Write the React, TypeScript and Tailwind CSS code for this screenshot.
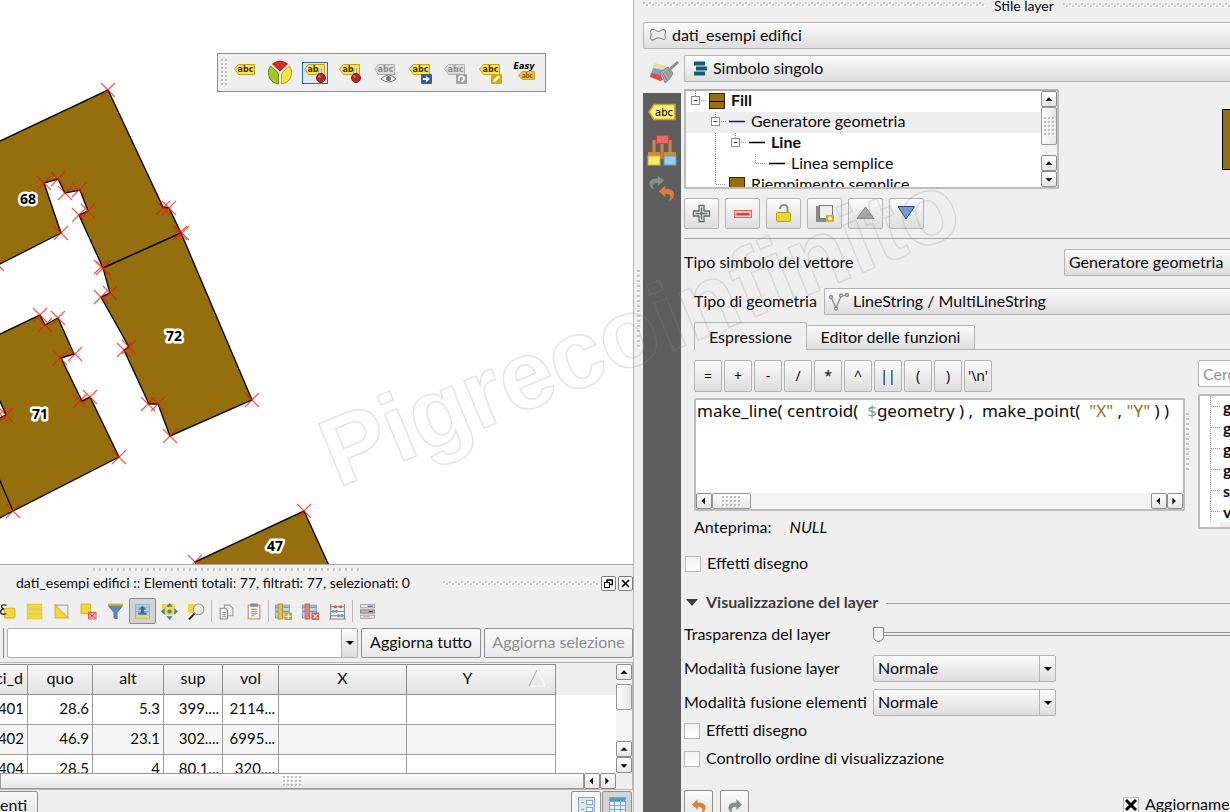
import { useState } from "react";
import type { ReactNode } from "react";

/* ---------- shared surfaces ---------- */

const raised =
  "border border-[#b4b4b4] bg-gradient-to-b from-[#fbfbfb] to-[#dedede]";

type HatchProps = { id: string; className?: string };

function Hatch({ id, className = "" }: HatchProps) {
  return (
    <svg className={`h-[5px] ${className}`} width="100%" aria-hidden="true">
      <defs>
        <pattern id={id} width="6" height="5" patternUnits="userSpaceOnUse">
          <rect x="1" y="1" width="2" height="2" fill="#fff" />
          <rect x="4" y="3" width="2" height="2" fill="#fff" />
          <rect x="0" y="0" width="2" height="2" fill="#c6c6c6" />
          <rect x="3" y="2" width="2" height="2" fill="#c6c6c6" />
        </pattern>
      </defs>
      <rect width="100%" height="5" fill={`url(#${id})`} />
    </svg>
  );
}

function Grip({ w, h }: { w: number; h: number }) {
  const dots: ReactNode[] = [];
  for (let y = 0; y < h; y += 4)
    for (let x = 0; x < w; x += 4)
      dots.push(
        <g key={`${x}-${y}`}>
          <rect x={x + 1} y={y + 1} width="2" height="2" fill="#fff" />
          <rect x={x} y={y} width="2" height="2" fill="#bdbdbd" />
        </g>
      );
  return (
    <svg width={w} height={h} aria-hidden="true">
      {dots}
    </svg>
  );
}

const arrows = {
  up: "M4 9L8 5L12 9Z",
  down: "M4 6L12 6L8 10Z",
  left: "M9 3L9 11L5 7Z",
  right: "M5 3L5 11L9 7Z",
};

function ScrollButton({ dir }: { dir: keyof typeof arrows }) {
  return (
    <button
      aria-label={`Scroll ${dir}`}
      className="flex h-4 w-4 shrink-0 items-center justify-center rounded-xs border border-[#8d8d8d] bg-gradient-to-b from-white to-[#e6e6e6]"
    >
      <svg width="14" height="14" viewBox="0 0 16 14">
        <path d={arrows[dir]} fill="#000" />
      </svg>
    </button>
  );
}

/* ---------- map canvas ---------- */

const buildings = [
  "-20,150 0,141 108,90 163,207 169,208 181,233 103,268 79,215 88,211 80,190 65,193 58,179 44,183 61,233 0,264 -20,274",
  "103,268 181,233 252,400 170,436 158,404 149,404 124,350 129,347 101,297 110,293",
  "-20,343 0,334 40,315 45,325 58,318 74,354 61,358 82,401 90,397 119,457 13,511 0,518 -20,528",
  "195,562 304,511 336,581 200,581",
];

const vertices = [
  [108, 90], [163, 208], [169, 208], [180, 233], [182, 233], [103, 268], [101, 267],
  [79, 215], [88, 211], [79, 190], [65, 193], [58, 179], [44, 183], [61, 233], [-3, 264],
  [252, 400], [170, 436], [158, 404], [148, 404], [124, 350], [129, 347], [101, 297], [110, 293],
  [40, 315], [45, 325], [58, 318], [75, 354], [60, 358], [80, 401], [90, 397], [119, 457],
  [13, 511], [6, 415], [0, 414], [195, 562], [304, 511],
];

const mapLabels = [
  { text: "68", x: 28, y: 204 },
  { text: "72", x: 174, y: 341 },
  { text: "71", x: 40, y: 419 },
  { text: "47", x: 275, y: 551 },
];

function MapDrawing() {
  return (
    <svg width="634" height="564" className="block" role="img" aria-label="Edifici">
      <g fill="#956f0d" stroke="#0b0b0b" strokeWidth="1.4">
        {buildings.map((p) => (
          <polygon key={p} points={p} />
        ))}
        <polygon points="-4,392 6,415 -4,420" fill="#fff" />
        <path d="M-2 476L13 511" />
      </g>
      <g stroke="#e5200f" strokeWidth="1.3" opacity="0.72">
        {vertices.map(([x, y], i) => (
          <path key={i} d={`M${x - 7} ${y - 7}l14 14m0 -14l-14 14`} />
        ))}
      </g>
      <g
        className="font-['Open_Sans','Noto_Sans',sans-serif] text-[14px] font-bold"
        textAnchor="middle"
        stroke="#fff"
        strokeWidth="5"
        strokeLinejoin="round"
        paintOrder="stroke"
      >
        {mapLabels.map((l) => (
          <text key={l.text} x={l.x} y={l.y}>
            {l.text}
          </text>
        ))}
      </g>
    </svg>
  );
}

/* ---------- label toolbar ---------- */

type TagProps = { gray?: boolean; label?: string; children?: ReactNode };

function TagIcon({ gray = false, label = "abc", children }: TagProps) {
  return (
    <svg width="24" height="24" viewBox="0 0 24 24" className="overflow-visible">
      <path
        d="M1.500 8L5.500 3.500H21.500V13.500H5.500Z"
        fill={gray ? "#dcdcdc" : "#fbe45c"}
        stroke={gray ? "#b0b0b0" : "#c79e1c"}
      />
      <text
        x={label === "abc" ? 12.500 : 10}
        y="11"
        textAnchor="middle"
        fontSize="8"
        fontWeight="700"
        fill={gray ? "#8e8e8e" : "#3c3310"}
        className="font-['DejaVu_Sans',sans-serif]"
      >
        {label}
      </text>
      {children}
    </svg>
  );
}

function Pin() {
  return (
    <g>
      <path d="M17 7V14" stroke="#777" strokeWidth="3" />
      <path d="M17 7V14" stroke="#eee" strokeWidth="1.500" />
      <circle cx="18" cy="17" r="4.500" fill="#b3271c" stroke="#7d150e" />
      <circle cx="16.500" cy="15.500" r="1.200" fill="#e2705f" />
    </g>
  );
}

function PieIcon() {
  return (
    <svg width="24" height="24" viewBox="0 0 24 24" className="overflow-visible">
      <path d="M12 10L4.500 3Q12 -2.500 19.500 3Z" fill="#d5301f" stroke="#9b1c10" />
      <path d="M10.500 12V23Q5 22.500 2 18Q-1.500 11 2.500 5Z" fill="#a8c32c" stroke="#6e8711" />
      <path d="M13.500 12V23Q19 22.500 22 18Q25.500 11 21.500 5Z" fill="#f3e14c" stroke="#bda31b" />
    </svg>
  );
}

function EasyIcon() {
  return (
    <svg width="24" height="24" viewBox="0 0 24 24" className="overflow-visible">
      <text
        x="11"
        y="8"
        textAnchor="middle"
        fontSize="8"
        fontWeight="700"
        fontStyle="italic"
        className="font-['DejaVu_Sans',sans-serif]"
      >
        Easy
      </text>
      <path d="M5.500 14.500L9 10.500H21.500V18.500H9Z" fill="#eec233" stroke="#cfa32a" />
      <text x="14.500" y="17" textAnchor="middle" fontSize="7" fontWeight="700" fill="#6b4a0c">
        abc
      </text>
    </svg>
  );
}

const labelTools: { name: string; icon: ReactNode; active?: boolean }[] = [
  { name: "Etichette", icon: <TagIcon /> },
  { name: "Diagrammi", icon: <PieIcon /> },
  { name: "Evidenzia etichette fissate", icon: <TagIcon label="ab"><Pin /></TagIcon>, active: true },
  { name: "Fissa etichette", icon: <TagIcon label="ab"><Pin /></TagIcon> },
  {
    name: "Mostra etichette",
    icon: (
      <TagIcon gray>
        <path d="M8 18Q15.500 10 23 18Q15.500 24 8 18Z" fill="#eee" stroke="#777" />
        <circle cx="15.500" cy="17.500" r="2.500" fill="#777" />
      </TagIcon>
    ),
  },
  {
    name: "Sposta etichetta",
    icon: (
      <TagIcon>
        <rect x="13" y="13" width="11" height="10" rx="1" fill="#3a5e93" />
        <path d="M15 17H18V15L22 18L18 21V19H15Z" fill="#fff" />
      </TagIcon>
    ),
  },
  {
    name: "Ruota etichetta",
    icon: (
      <TagIcon gray>
        <rect x="13" y="13" width="11" height="10" rx="1" fill="#a3a3a3" />
        <path d="M16 20V16.500Q18.500 13.500 21 16.500Q21.500 19.500 18.500 20.500" fill="none" stroke="#fff" strokeWidth="1.500" />
      </TagIcon>
    ),
  },
  {
    name: "Modifica etichetta",
    icon: (
      <TagIcon>
        <rect x="13" y="13" width="11" height="10" rx="1" fill="#d8a90f" />
        <path d="M15 21L16 18.500L20.500 14.500L22 16L17.500 20.500Z" fill="#fff" />
      </TagIcon>
    ),
  },
  { name: "Easy custom labeling", icon: <EasyIcon /> },
];

function LabelToolbar() {
  return (
    <div className="absolute top-[53px] left-[217px] flex h-[39px] items-center border border-[#8f8f8f] bg-[#efefef] px-[3px]">
      <Grip w={6} h={28} />
      {labelTools.map((t) => (
        <button key={t.name} aria-label={t.name} className="flex w-[35px] justify-center">
          <span className={t.active ? "-mt-1 -mb-1 h-5 bg-[#dbe8f4] outline outline-[#2a6fb5]" : "h-5"}>
            <span className="-mt-0.5 block">{t.icon}</span>
          </span>
        </button>
      ))}
    </div>
  );
}

/* ---------- attribute table dock ---------- */

function Plate({ children }: { children: ReactNode }) {
  return (
    <svg width="17" height="17" viewBox="0 0 16 16">
      {children}
    </svg>
  );
}

type Tool = { name: string; icon: ReactNode; pressed?: boolean; ruleAfter?: boolean };

const yellow = "#f3d83a";

const tableTools: Tool[] = [
  {
    name: "Seleziona con espressione",
    icon: (
      <Plate>
        <rect x="5" y="5" width="10" height="9" rx="1" fill={yellow} stroke="#d8b52c" />
        <path d="M7 2Q2 1 2.500 4Q3 5.500 5 5.500Q1 6 1.500 9Q3 11.500 7 10" fill="none" stroke="#333" strokeWidth="1.300" />
      </Plate>
    ),
  },
  {
    name: "Seleziona tutto",
    icon: (
      <Plate>
        {[1, 6, 11].map((y) => (
          <rect key={y} x="1" y={y} width="14" height="4" fill={yellow} stroke="#d3b634" strokeWidth="0.500" />
        ))}
      </Plate>
    ),
  },
  {
    name: "Inverti selezione",
    icon: (
      <Plate>
        <path d="M2 2H14V14Z" fill="#ededed" stroke="#aaa" />
        <path d="M2 2L14 14H2Z" fill={yellow} stroke="#d8b52c" />
      </Plate>
    ),
  },
  {
    name: "Deseleziona tutto",
    icon: (
      <Plate>
        <rect x="1" y="1" width="9" height="9" fill={yellow} stroke="#d8b52c" />
        <rect x="8" y="9" width="7" height="6" fill="#f8d8d2" stroke="#dc5b4b" />
        <path d="M9 10L14 14M14 10L9 14" stroke="#dc3c2c" />
      </Plate>
    ),
  },
  {
    name: "Filtra",
    icon: (
      <Plate>
        <path d="M1 2H15L9.500 9V15L6.500 14V9Z" fill="#5b8ab5" stroke="#3d678f" strokeWidth="0.700" />
        <path d="M1 1.500H15" stroke="#e4a93b" strokeWidth="2" />
      </Plate>
    ),
  },
  {
    name: "Sposta selezione in alto",
    pressed: true,
    icon: (
      <Plate>
        <rect x="1.500" y="1.500" width="13" height="13" fill="#b9d3e6" stroke="#8fb1ca" />
        <path d="M1 4.500H15M1 8H15" stroke="#8fb1ca" />
        <rect x="2" y="11.500" width="12" height="3" fill={yellow} />
        <path d="M8 2.500L12 6H9.500V9H12V11H4V9H6.500V6H4Z" fill="#3a6f9c" />
      </Plate>
    ),
  },
  {
    name: "Centra sulla selezione",
    icon: (
      <Plate>
        <rect x="1" y="1" width="12" height="10" fill={yellow} />
        <path d="M8 0L11 3.500H5ZM8 16L11 12.500H5ZM0 8L3.500 5V11ZM16 8L12.500 5V11Z" fill="#4c7fb0" />
        <circle cx="8" cy="8" r="2" fill="#4c7fb0" />
      </Plate>
    ),
  },
  {
    name: "Zoom sulla selezione",
    ruleAfter: true,
    icon: (
      <Plate>
        <rect x="0" y="1" width="8" height="8" fill={yellow} />
        <circle cx="10" cy="6" r="5" fill="#f0eede" stroke="#999" />
        <path d="M6 10L1 15.500" stroke="#3b3520" strokeWidth="2" />
      </Plate>
    ),
  },
  {
    name: "Copia righe",
    icon: (
      <Plate>
        <path d="M6 2H11L14 5V12H6Z" fill="#eee" stroke="#999" />
        <path d="M2 5H7L9 7V15H2Z" fill="#f2f2f2" stroke="#8b8b8b" />
        <path d="M4 9H7.500M4 11H7.500M4 13H7.500" stroke="#999" />
      </Plate>
    ),
  },
  {
    name: "Incolla righe",
    ruleAfter: true,
    icon: (
      <Plate>
        <rect x="3" y="2" width="11" height="13" fill="#eee" stroke="#c28d66" />
        <rect x="5" y="0.500" width="7" height="3" fill="#888" />
        <path d="M6 6H11M6 8H11M6 10H11M6 12H9" stroke="#999" />
      </Plate>
    ),
  },
  {
    name: "Nuova colonna",
    icon: (
      <Plate>
        <rect x="0.500" y="2" width="13" height="12" fill="#c3dcec" stroke="#7ba3c0" />
        <path d="M1 4H13M1 8H13" stroke="#6e9dbf" strokeWidth="1.500" />
        <rect x="3" y="1" width="4" height="14" fill="#e8c25c" stroke="#b98d25" />
        <rect x="9" y="9" width="7" height="7" fill="#d3a614" />
        <path d="M12.500 10V15M10 12.500H15" stroke="#fff" />
      </Plate>
    ),
  },
  {
    name: "Elimina colonna",
    icon: (
      <Plate>
        <rect x="0.500" y="2" width="13" height="12" fill="#c3dcec" stroke="#7ba3c0" />
        <path d="M1 4H13M1 8H13" stroke="#6e9dbf" strokeWidth="1.500" />
        <rect x="3" y="1" width="4" height="14" fill="#ef7f76" stroke="#d95c53" />
        <rect x="9" y="9" width="7" height="7" fill="#dd574b" />
        <path d="M10.500 10.500L14.500 14.500M14.500 10.500L10.500 14.500" stroke="#fff" />
      </Plate>
    ),
  },
  {
    name: "Calcolatore di campi",
    ruleAfter: true,
    icon: (
      <Plate>
        <path d="M1.500 1V15M14.500 1V15M1 3.500H15M1 8H15M1 12H15M0 15H16" stroke="#858585" />
        <g fill="#d8584c">
          <circle cx="6" cy="3.500" r="1.500" />
          <circle cx="11" cy="3.500" r="1.500" />
        </g>
        <g fill="#6d95b6">
          <circle cx="4" cy="8" r="1.300" />
          <circle cx="7" cy="8" r="1.300" />
          <circle cx="9" cy="12" r="1.300" />
          <circle cx="12" cy="12" r="1.300" />
        </g>
      </Plate>
    ),
  },
  {
    name: "Formattazione condizionale",
    icon: (
      <Plate>
        <g fill="#eee" stroke="#aaa">
          <rect x="1.500" y="1.500" width="13" height="3" />
          <rect x="1.500" y="11.500" width="13" height="3" />
        </g>
        <rect x="1.500" y="6.500" width="13" height="3" fill="#b9b9ac" stroke="#8d8d8d" />
        <path d="M8 3H13M9 8H13" stroke="#443a5a" />
        <path d="M4 13H10" stroke="#e08f7a" />
      </Plate>
    ),
  },
];

const columns = [
  { label: "ci_d", width: "w-[28px]" },
  { label: "quo", width: "w-[65px]" },
  { label: "alt", width: "w-[71px]" },
  { label: "sup", width: "w-[59px]" },
  { label: "vol", width: "w-[56px]" },
  { label: "X", width: "w-[128px]" },
  { label: "Y", width: "w-[149px]" },
];

const rows = [
  ["401", "28.6", "5.3", "399....", "2114...", "", ""],
  ["402", "46.9", "23.1", "302....", "6995...", "", ""],
  ["404", "28.5", "4", "80.1...", "320....", "", ""],
];

function AttributeTable() {
  return (
    <div className="mt-1 flex h-32 border-t border-r border-b border-[#b5b5b5] pt-px">
      <div className="flex min-w-0 flex-1 flex-col">
        <div className="h-[110px] overflow-hidden bg-[#fefefe]">
          <div className="bg-[linear-gradient(#efefef_31px,#fefefe_31px)]">
            <table className="w-[556px] table-fixed border-separate border-spacing-0">
              <thead>
                <tr>
                  {columns.map((c) => (
                    <th
                      key={c.label}
                      scope="col"
                      className={`${c.width} h-[31px] border-t border-r border-b border-[#8f8f8f] bg-gradient-to-b from-[#f8f8f8] to-[#e2e2e2] p-0 pb-1 text-center font-normal`}
                    >
                      {c.label === "Y" ? (
                        <span className="flex items-center">
                          <span className="w-[121px]">{c.label}</span>
                          <svg width="18" height="18" viewBox="0 0 18 18">
                            <path d="M1 17H17L9 1" fill="none" stroke="#fff" />
                            <path d="M1 17L9 1" stroke="#a5a5a5" />
                          </svg>
                        </span>
                      ) : (
                        <span className={c.label === "ci_d" ? "float-right mr-1" : ""}>{c.label}</span>
                      )}
                    </th>
                  ))}
                </tr>
              </thead>
              <tbody className="text-[15px]">
                {rows.map((r) => (
                  <tr key={r[0]} className="odd:bg-[#fefefe] even:bg-[#f5f5f5]">
                    {r.map((cell, i) => (
                      <td
                        key={i}
                        className="h-[30px] border-r border-b border-[#9c9c9c] p-0 pr-[3px] pb-1 text-right whitespace-nowrap"
                      >
                        <span className="float-right">{cell}</span>
                      </td>
                    ))}
                  </tr>
                ))}
              </tbody>
            </table>
          </div>
        </div>
        <div className="flex h-4 bg-[#efefef]">
          <div className="flex min-w-0 flex-1 items-center justify-center border border-[#999] bg-gradient-to-b from-white to-[#e4e4e4]">
            <Grip w={19} h={11} />
          </div>
          <ScrollButton dir="left" />
          <ScrollButton dir="right" />
        </div>
      </div>
      <div className="mb-4 flex w-4 flex-col bg-[#f3f3f3]">
        <ScrollButton dir="up" />
        <div className="mt-1 h-[26px] rounded-xs border border-[#999] bg-gradient-to-r from-white to-[#e4e4e4]" />
        <div className="flex-1" />
        <ScrollButton dir="up" />
        <ScrollButton dir="down" />
      </div>
    </div>
  );
}

function TableDock() {
  return (
    <section className="flex shrink-0 flex-col bg-[#efefef]">
      <div className="flex h-[8px] items-start justify-center border-t border-[#ababab] pt-[3px] pr-[180px]">
        <div className="h-[3px] w-[268px] bg-[repeating-linear-gradient(90deg,#c6c6c6_0_2px,#fff_2px_3px,transparent_3px_6px)]" />
      </div>
      <header className="flex h-[22px] items-center pl-4 text-[14px]">
        <h2 className="whitespace-nowrap">
          dati_esempi edifici :: Elementi totali: 77, filtrati: 77, selezionati: 0
        </h2>
        <div className="ml-auto flex items-center gap-0.5">
          <div className="w-[156px]">
            <Hatch id="dock-hatch" />
          </div>
          <button aria-label="Sgancia" className="flex h-[15px] w-[15px] items-center justify-center rounded-xs border border-[#7a7a7a] bg-white">
            <svg width="9" height="9" viewBox="0 0 9 9" fill="none" stroke="#000">
              <path d="M3 3V1H8.500V5.500H6" strokeWidth="1.500" />
              <rect x="0.500" y="3.500" width="5" height="5" />
            </svg>
          </button>
          <button aria-label="Chiudi" className="flex h-[15px] w-[15px] items-center justify-center rounded-xs border border-[#7a7a7a] bg-white">
            <svg width="9" height="9" viewBox="0 0 9 9" stroke="#000" strokeWidth="1.700">
              <path d="M1 1L8 8M8 1L1 8" />
            </svg>
          </button>
        </div>
      </header>
      <div className="-ml-1.5 flex h-[34px] items-center">
        {tableTools.map((t) => (
          <div key={t.name} className="flex items-center">
            <button
              aria-label={t.name}
              className={
                t.pressed
                  ? "flex h-[26px] w-[27px] items-center justify-center rounded-xs border border-[#8a8a8a] bg-[#d3d3d3]"
                  : "flex h-[26px] w-[27px] items-center justify-center"
              }
            >
              {t.icon}
            </button>
            {t.ruleAfter && <div className="mx-px h-[22px] w-px bg-[#bbb]" />}
          </div>
        ))}
      </div>
      <div className="flex h-[30px] gap-[3px]">
        <div className="w-1 border-r border-[#8f8f8f]" />
        <div className="flex min-w-0 flex-1 rounded-xs border border-[#b0b0b0] bg-[#fefefe]">
          <input aria-label="Espressione di aggiornamento" className="min-w-0 flex-1 px-1 outline-none" />
          <button aria-label="Apri elenco" className="flex w-4 items-center justify-center border-l border-[#b0b0b0] bg-gradient-to-b from-[#fbfbfb] to-[#dedede]">
            <svg width="8" height="4" viewBox="0 0 8 4">
              <path d="M0 0H8L4 4Z" />
            </svg>
          </button>
        </div>
        <button className="w-[120px] rounded-xs border border-[#8f8f8f] bg-gradient-to-b from-[#fafafa] to-[#eaeaea] pb-0.5 whitespace-nowrap">
          Aggiorna tutto
        </button>
        <button disabled className="w-[149px] rounded-xs border border-[#8f8f8f] bg-gradient-to-b from-[#fafafa] to-[#eaeaea] pb-0.5 whitespace-nowrap text-[#8b8f8b]">
          Aggiorna selezione
        </button>
      </div>
      <AttributeTable />
      <footer className="flex h-[22px] items-start justify-between overflow-hidden pt-px pr-px">
        <button className="-ml-px h-7 w-[39px] shrink-0 rounded-tr-xs border border-[#8f8f8f] bg-gradient-to-b from-[#f8f8f8] to-[#e6e6e6] text-left">
          enti
        </button>
        <div className="flex gap-px">
          <button aria-label="Vista modulo" className="h-7 w-[30px] rounded-xs border border-[#8f8f8f] bg-[#f6f6f6] px-1.5">
            <svg width="17" height="20" viewBox="0 0 17 20" fill="#dbe8f1" stroke="#86a7c0">
              <rect x="0.500" y="2.500" width="16" height="18" />
              <rect x="8.500" y="5.500" width="6" height="4" fill="#fff" />
              <rect x="8.500" y="12.500" width="6" height="4" fill="#fff" />
              <path d="M3 7.500H6M3 14.500H6" />
            </svg>
          </button>
          <button aria-label="Vista tabella" className="h-7 w-[30px] rounded-xs border border-[#8f8f8f] bg-[#d3d3d3] px-1.5">
            <svg width="17" height="20" viewBox="0 0 17 20" stroke="#86a7c0">
              <rect x="0.500" y="2.500" width="16" height="18" fill="#e6eff5" />
              <rect x="0.500" y="2.500" width="16" height="4" fill="#4f9ac7" />
              <path d="M0 10.500H17M0 14.500H17M0 18.500H17M5.500 6V20M11.500 6V20" />
            </svg>
          </button>
        </div>
      </footer>
    </section>
  );
}

/* ---------- layer styling dock ---------- */

type ComboProps = {
  label: string;
  id: string;
  options: string[];
  icon?: ReactNode;
  bleed?: boolean;
  className?: string;
};

function Combo({ label, id, options, icon, bleed = false, className = "" }: ComboProps) {
  return (
    <div
      className={`flex h-[27px] items-center ${raised} ${bleed ? "rounded-l-xs border-r-0" : "rounded-xs"} ${className}`}
    >
      {icon}
      <select
        id={id}
        aria-label={label}
        className="h-full min-w-0 flex-1 appearance-none bg-transparent pb-0.5 pl-1 outline-none"
      >
        {options.map((o) => (
          <option key={o}>{o}</option>
        ))}
      </select>
      {!bleed && (
        <span className="pointer-events-none flex h-full w-4 items-center justify-center border-l border-[#b4b4b4]">
          <svg width="8" height="4" viewBox="0 0 8 4">
            <path d="M0 0H8L4 4Z" />
          </svg>
        </span>
      )}
    </div>
  );
}

function Check({ id, label, checked = false }: { id: string; label: string; checked?: boolean }) {
  const [on, setOn] = useState(checked);
  return (
    <div className="flex h-[18px] items-center gap-1.5">
      <span className="relative flex h-4 w-4 shrink-0">
        <input
          id={id}
          type="checkbox"
          checked={on}
          onChange={(e) => setOn(e.target.checked)}
          className="h-4 w-4 appearance-none border border-[#b9b9b9] bg-gradient-to-b from-[#f2f2f2] to-white"
        />
        {on && (
          <svg className="pointer-events-none absolute inset-0" width="16" height="16" viewBox="0 0 16 16" stroke="#000" strokeWidth="3">
            <path d="M3 3L13 13M13 3L3 13" />
          </svg>
        )}
      </span>
      <label htmlFor={id} className="pb-0.5 whitespace-nowrap">
        {label}
      </label>
    </div>
  );
}

type Guide = "box" | "corner" | "none";
type TreeRow = {
  label: string;
  indent: string;
  guide: Guide;
  extra: number[];
  swatch: ReactNode;
  bold?: boolean;
  selected?: boolean;
};

const swatchLine = (color: string) => (
  <svg width="16" height="16" viewBox="0 0 16 16">
    <path d="M0 7.500H16" stroke={color} strokeWidth="1.500" />
  </svg>
);
const swatchFill = (line: boolean) => (
  <svg width="16" height="16" viewBox="0 0 16 16">
    <rect x="0.500" y="0.500" width="15" height="15" fill="#956f0d" stroke="#40200a" />
    {line && <path d="M0 8.500H16" stroke="#000" />}
  </svg>
);

const treeRows: TreeRow[] = [
  { label: "Fill", indent: "pl-[5px]", guide: "box", extra: [], swatch: swatchFill(true), bold: true },
  { label: "Generatore geometria", indent: "pl-[25px]", guide: "box", extra: [], swatch: swatchLine("#1a1658"), selected: true },
  { label: "Line", indent: "pl-[45px]", guide: "box", extra: [-15.500], swatch: swatchLine("#000"), bold: true },
  { label: "Linea semplice", indent: "pl-[65px]", guide: "corner", extra: [-35.500], swatch: swatchLine("#000") },
  { label: "Riempimento semplice", indent: "pl-[25px]", guide: "corner", extra: [], swatch: swatchFill(false) },
];

function TreeGuide({ guide, extra }: { guide: Guide; extra: number[] }) {
  return (
    <svg width="18" height="21" viewBox="0 0 18 21" className="shrink-0 overflow-visible" fill="none">
      <g stroke="#9b9b9b" strokeDasharray="1 1">
        {guide === "box" && <path d="M4.500 0V6M10 9.500H15" />}
        {guide === "corner" && <path d="M4.500 0V9.500H15" />}
        {extra.map((x) => (
          <path key={x} d={`M${x} 0V21`} />
        ))}
      </g>
      {guide === "box" && (
        <g stroke="#8a8a8a">
          <rect x="0.500" y="5.500" width="8" height="8" fill="#fff" />
          <path d="M2.500 9.500H6.500" stroke="#444" />
        </g>
      )}
    </svg>
  );
}

function SymbolTree() {
  return (
    <div className="mt-[7px] flex justify-between">
      <div className="flex h-[100px] w-[375px] rounded-xs border-2 border-[#bdbdbd] border-t-[#b0b0b0] bg-[#fefefe]">
        <ul className="min-w-0 flex-1 overflow-hidden">
          {treeRows.map((r) => (
            <li
              key={r.label}
              className={`flex h-[21px] items-center ${r.indent} ${r.selected ? "bg-[#eee]" : ""} ${r.bold ? "font-bold" : ""}`}
            >
              <TreeGuide guide={r.guide} extra={r.extra} />
              <span className="mr-1.5 shrink-0 pb-0.5">{r.swatch}</span>
              <span className="pb-1 whitespace-nowrap">{r.label}</span>
            </li>
          ))}
        </ul>
        <div className="flex w-4 flex-col bg-[#f3f3f3]">
          <ScrollButton dir="up" />
          <div className="flex h-[38px] items-center justify-center rounded-xs border border-[#999] bg-gradient-to-r from-white to-[#e4e4e4]">
            <Grip w={11} h={19} />
          </div>
          <div className="flex-1" />
          <ScrollButton dir="up" />
          <ScrollButton dir="down" />
        </div>
      </div>
      <div className="mt-5 h-[61px] w-2 border border-r-0 border-black bg-[#956f0d]" />
    </div>
  );
}

const layerButtons: { name: string; icon: ReactNode; strong?: boolean }[] = [
  {
    name: "Aggiungi",
    icon: (
      <g>
        <path d="M7 1.500H12V7H17.500V12H12V17.500H7V12H1.500V7H7Z" fill="#e9eeea" stroke="#5f6a66" strokeWidth="1.300" />
        <path d="M9.500 3.500V15.500M3.500 9.500H15.500" stroke="#5f6a66" strokeWidth="1.500" />
      </g>
    ),
  },
  {
    name: "Rimuovi",
    icon: (
      <g>
        <rect x="1.500" y="6.500" width="17" height="7" fill="#f6c4be" stroke="#e8635a" />
        <rect x="3.500" y="9" width="13" height="2.500" fill="#d5453d" />
      </g>
    ),
  },
  {
    name: "Blocca",
    icon: (
      <g>
        <path d="M6 5V4.500Q6.500 1 10 1Q13.500 1 13.500 5V9" fill="none" stroke="#8f8f8f" strokeWidth="2" />
        <rect x="2.500" y="8.500" width="14" height="9" rx="1" fill="#ecd53a" stroke="#b79a12" />
      </g>
    ),
  },
  {
    name: "Duplica",
    icon: (
      <g>
        <rect x="1" y="2" width="14" height="16" fill="#8c8c86" />
        <rect x="4.500" y="1.500" width="13" height="13" fill="#eee" stroke="#777" />
        <rect x="11" y="11" width="8" height="7" rx="1" fill="#d7a92c" />
        <circle cx="15" cy="14.500" r="2" fill="#fff3bf" />
      </g>
    ),
  },
  {
    name: "Sposta su",
    strong: true,
    icon: <path d="M1 14.500L9.500 3L18 14.500Z" fill="#a8a8a8" stroke="#858585" />,
  },
  {
    name: "Sposta giù",
    icon: <path d="M1 2.500H17.500L9 15Z" fill="#6f9fce" stroke="#2c4870" />,
  },
];

const operators = ["=", "+", "-", "/", "*", "^", "||", "(", ")", "'\\n'"];

const tokenPattern = /("[^"]*"|\$)/;

function ExpressionEditor() {
  const [code, setCode] = useState('make_line( centroid(  $geometry ) ,  make_point(  "X" , "Y" ) )');
  return (
    <div className="mt-1.5 flex h-[113px] flex-col rounded-xs border-2 border-[#bdbdbd] bg-[#fefefe]">
      <div className="relative min-h-0 flex-1 overflow-hidden font-['Noto_Sans',sans-serif] text-[17px] leading-[22px]">
        <pre aria-hidden="true" className="px-px font-[inherit]">
          {code.split(tokenPattern).map((part, i) => (
            <span
              key={i}
              className={part === "$" ? "text-[#8c9a94]" : part.startsWith('"') ? "text-[#87781a]" : ""}
            >
              {part}
            </span>
          ))}
        </pre>
        <textarea
          aria-label="Espressione"
          spellCheck={false}
          value={code}
          onChange={(e) => setCode(e.target.value)}
          className="absolute inset-0 h-full w-full resize-none overflow-hidden bg-transparent px-px whitespace-pre text-transparent caret-black outline-none"
        />
      </div>
      <div className="flex h-4 bg-[#f3f3f3]">
        <ScrollButton dir="left" />
        <div className="flex w-[39px] items-center justify-center rounded-xs border border-[#999] bg-gradient-to-b from-white to-[#e4e4e4]">
          <Grip w={19} h={11} />
        </div>
        <div className="flex-1" />
        <ScrollButton dir="left" />
        <ScrollButton dir="right" />
      </div>
    </div>
  );
}

const functionGroups = ["g", "g", "g", "g", "s", "v"];

function ExpressionPanel() {
  return (
    <div className="mt-2.5 flex pl-2.5">
      <div className="w-[491px] shrink-0">
        <div className="flex h-8 gap-0.5">
          {operators.map((o) => (
            <button
              key={o}
              className={`w-7 rounded-xs font-['Noto_Sans',sans-serif] text-[14px] whitespace-nowrap ${raised}`}
            >
              {o}
            </button>
          ))}
        </div>
        <ExpressionEditor />
        <p className="mt-[7px] flex h-[18px] items-center gap-[18px]">
          <span>Anteprima:</span>
          <output className="italic">NULL</output>
        </p>
      </div>
      <div className="flex w-[13px] shrink-0 items-center pb-3 pl-px">
        <div className="h-[58px] w-[3px] bg-[repeating-linear-gradient(180deg,#c6c6c6_0_2px,#fff_2px_3px,transparent_3px_5px)]" />
      </div>
      <div className="min-w-0 flex-1 overflow-hidden">
        <input
          aria-label="Cerca funzione"
          placeholder="Cerca"
          className="h-[27px] w-[120px] rounded-xs border border-[#b4b4b4] bg-[#fefefe] px-1 placeholder:text-[#949494]"
        />
        <ul className="mt-[7px] h-[135px] w-[120px] overflow-hidden rounded-xs border-2 border-[#bdbdbd] bg-[#fefefe] font-bold">
          {functionGroups.map((g, i) => (
            <li key={i} className="flex h-[21px] items-center">
              <svg width="23" height="21" className="shrink-0">
                <path d="M10.500 0V21M11 10.500H21" stroke="#9b9b9b" strokeDasharray="1 1" fill="none" />
              </svg>
              {g}
            </li>
          ))}
          <li className="ml-5 h-[21px] bg-[#eee]" />
        </ul>
      </div>
    </div>
  );
}

function CurvedArrow({ color, flip = false, size }: { color: string; flip?: boolean; size: number }) {
  return (
    <svg width={size} height={size} viewBox="0 0 18 18">
      <path
        transform={flip ? "matrix(-1 0 0 1 18 0)" : undefined}
        d="M1 7.500L7.500 1.500V5Q16 4.500 16.500 11Q16 16 11 17Q13.500 14.500 12.500 12Q11.500 9.800 7.500 10V13.500Z"
        fill={color}
      />
    </svg>
  );
}

function StyleTabs() {
  return (
    <nav className="flex w-[38px] shrink-0 flex-col bg-[#5e5e5e]">
      <button aria-label="Simbologia" className="flex h-11 items-center justify-center bg-[#efefef] pt-1 pl-1">
        <svg width="30" height="26" viewBox="0 0 30 26">
          <path d="M6 3L17 6L14 12L3 9Z" fill="#ecd9a8" />
          <path d="M4 8L14 10L11 17L2 14Z" fill="#6aa6d6" />
          <path d="M2 13L12 15L14 20L11 21L1 17Z" fill="#e0503f" />
          <path d="M11 12L19 7L24 13Q22 19 16 23Q15 18 11 12Z" fill="#a9a9a9" stroke="#8a8a8a" />
          <path d="M14 13L18 20M16.500 11.500L20.500 17M19 9.500L22.500 14.500" stroke="#858585" />
          <path d="M20 10L29 2" stroke="#8e8e8e" strokeWidth="3" />
        </svg>
      </button>
      <button aria-label="Etichette" className="flex h-[38px] items-center justify-center">
        <svg width="28" height="18" viewBox="0 0 28 18">
          <path d="M1 9L6 1.500H27V16.500H6Z" fill="#fbee7c" stroke="#c9a51c" strokeWidth="1.500" />
          <text x="16" y="13" textAnchor="middle" fontSize="10" className="font-['DejaVu_Sans',sans-serif]">
            abc
          </text>
        </svg>
      </button>
      <button aria-label="Stili" className="flex h-[38px] items-center justify-center">
        <svg width="30" height="32" viewBox="0 0 30 32">
          <path d="M7 6V20M15 8V25M23 6V20" stroke="#d08a3c" strokeWidth="3" />
          <rect x="9.500" y="1.500" width="12" height="8" fill="#e9686a" stroke="#c64346" />
          <rect x="1" y="18" width="12" height="4" fill="#d08a3c" />
          <rect x="17" y="18" width="12" height="4" fill="#d08a3c" />
          <rect x="1" y="22" width="12" height="9" fill="#f7e96b" stroke="#cfb93a" />
          <rect x="17" y="22" width="12" height="9" fill="#9bcdec" stroke="#5d9cc4" />
        </svg>
      </button>
      <button aria-label="Cronologia" className="flex h-[38px] items-center justify-center">
        <svg width="28" height="28" viewBox="0 0 28 28">
          <path
            transform="matrix(-0.950 0 0 0.900 17 0)"
            d="M1 7.500L7.500 1.500V5Q16 4.500 16.500 11Q16 16 11 17Q13.500 14.500 12.500 12Q11.500 9.800 7.500 10V13.500Z"
            fill="#839089"
          />
          <path
            transform="matrix(0.980 0 0 0.980 10 10)"
            d="M1 7.500L7.500 1.500V5Q16 4.500 16.500 11Q16 16 11 17Q13.500 14.500 12.500 12Q11.500 9.800 7.500 10V13.500Z"
            fill="#e0793c"
          />
        </svg>
      </button>
    </nav>
  );
}

function StyleDock() {
  return (
    <aside className="flex w-[587px] shrink-0 flex-col overflow-hidden">
      <header className="flex h-[22px] items-start gap-[9px]">
        <div className="w-[342px] shrink-0 pt-0.5">
          <Hatch id="style-hatch-left" />
        </div>
        <h2 className="-mt-0.5 text-[14px] leading-4 whitespace-nowrap">Stile layer</h2>
        <div className="min-w-0 flex-1 pt-[3px]">
          <Hatch id="style-hatch-right" />
        </div>
      </header>
      <Combo
        id="layer"
        label="Layer"
        bleed
        options={["dati_esempi edifici"]}
        icon={
          <svg width="20" height="16" viewBox="0 0 20 16" className="ml-1 shrink-0 pb-0.5">
            <path d="M1.500 3.500Q2 1.500 4.500 1.500Q7 2 8.500 3.500Q10.500 4.500 13 3Q15.500 1 17.500 2Q19 3 18.500 6Q17.500 8 18.500 11Q18.500 13.500 16 13Q12 10.500 9 11.500Q6 13.500 3.500 14Q1 13.500 1.500 11Q2.500 7.500 1.500 3.500Z" fill="#ececec" stroke="#8f8f8f" strokeWidth="1.300" />
          </svg>
        }
      />
      <div className="flex min-h-0 flex-1">
        <StyleTabs />
        <div className="flex min-w-0 flex-1 flex-col pl-[3px]">
          <Combo
            id="renderer"
            label="Tipo di simbologia"
            bleed
            className="mt-1.5 shrink-0"
            options={["Simbolo singolo"]}
            icon={
              <svg width="16" height="16" viewBox="0 0 16 16" className="ml-2 shrink-0">
                <path d="M1 2.500H12M3 7.500H14M1 12.500H12" stroke="#165a78" strokeWidth="4" />
              </svg>
            }
          />
          <SymbolTree />
          <div className="mt-[9px] flex gap-1.5">
            {layerButtons.map((b) => (
              <button
                key={b.name}
                aria-label={b.name}
                className={`flex h-[31px] w-[35px] items-center justify-center rounded-xs ${raised} ${b.strong ? "border-[#8f8f8a]" : ""}`}
              >
                <svg width="20" height="20" viewBox="0 0 20 20">
                  {b.icon}
                </svg>
              </button>
            ))}
          </div>
          <hr className="mt-[9px] border-[#a6a6a6]" />
          <div className="mt-2.5 flex items-center justify-between">
            <label htmlFor="symbol-type" className="pb-0.5 whitespace-nowrap">
              Tipo simbolo del vettore
            </label>
            <Combo
              id="symbol-type"
              label="Tipo simbolo del vettore"
              bleed
              className="w-[166px]"
              options={["Generatore geometria"]}
            />
          </div>
          <div className="mt-3 flex items-center pl-2.5">
            <label htmlFor="geometry-type" className="w-[130px] pb-0.5 whitespace-nowrap">
              Tipo di geometria
            </label>
            <Combo
              id="geometry-type"
              label="Tipo di geometria"
              bleed
              className="min-w-0 flex-1"
              options={["LineString / MultiLineString"]}
              icon={
                <svg width="20" height="18" viewBox="0 0 20 18" className="ml-1 shrink-0" fill="#ddd" stroke="#8a8a8a" strokeWidth="1.300">
                  <path d="M2 4L7 15L12 3L18 2" fill="none" />
                  <circle cx="2" cy="4" r="1.500" />
                  <circle cx="7" cy="15.500" r="1.500" />
                  <circle cx="12" cy="2.500" r="1.500" />
                  <circle cx="18" cy="2" r="1.500" />
                </svg>
              }
            />
          </div>
          <div role="tablist" className="mt-[7px] flex h-7 items-end pl-2.5">
            <button role="tab" aria-selected="true" className="h-7 w-[113px] rounded-t-xs border border-b-0 border-[#b4b4b4] whitespace-nowrap">
              Espressione
            </button>
            <button role="tab" aria-selected="false" className={`h-[25px] w-[168px] rounded-t-xs border-l-0 pb-0.5 whitespace-nowrap ${raised}`}>
              Editor delle funzioni
            </button>
            <div className="flex-1 border-b border-[#b4b4b4]" />
          </div>
          <ExpressionPanel />
          <div className="mt-[19px] pl-px">
            <Check id="draw-effects" label="Effetti disegno" />
          </div>
          <div className="mt-5 flex h-5 items-center gap-2">
            <svg width="12" height="8" viewBox="0 0 12 8" className="ml-0.5">
              <path d="M0 0H12L6 7Z" fill="#3f3f3f" />
            </svg>
            <h3 className="pb-0.5 font-bold whitespace-nowrap text-[#3c3c3c]">Visualizzazione del layer</h3>
            <hr className="flex-1 border-[#a0a0a0]" />
          </div>
          <div className="mt-[11px] flex h-5 items-center">
            <label htmlFor="opacity" className="w-[189px] shrink-0 whitespace-nowrap">
              Trasparenza del layer
            </label>
            <input
              id="opacity"
              type="range"
              defaultValue={0}
              className="h-4 min-w-0 flex-1 appearance-none bg-transparent [&::-webkit-slider-runnable-track]:h-1 [&::-webkit-slider-runnable-track]:border-y [&::-webkit-slider-runnable-track]:border-[#929292] [&::-webkit-slider-thumb]:-mt-[6px] [&::-webkit-slider-thumb]:h-[15px] [&::-webkit-slider-thumb]:w-[11px] [&::-webkit-slider-thumb]:appearance-none [&::-webkit-slider-thumb]:rounded-t-xs [&::-webkit-slider-thumb]:rounded-b-full [&::-webkit-slider-thumb]:border [&::-webkit-slider-thumb]:border-[#858585] [&::-webkit-slider-thumb]:bg-[#f1f1f1]"
            />
          </div>
          <div className="mt-[11px] flex items-center">
            <label htmlFor="layer-blend" className="w-[189px] pb-0.5 whitespace-nowrap">
              Modalità fusione layer
            </label>
            <Combo id="layer-blend" label="Modalità fusione layer" className="w-[183px]" options={["Normale"]} />
          </div>
          <div className="mt-[7px] flex items-center">
            <label htmlFor="feature-blend" className="w-[189px] pb-0.5 whitespace-nowrap">
              Modalità fusione elementi
            </label>
            <Combo id="feature-blend" label="Modalità fusione elementi" className="w-[183px]" options={["Normale"]} />
          </div>
          <div className="mt-1.5 flex flex-col gap-2.5">
            <Check id="layer-effects" label="Effetti disegno" />
            <Check id="render-order" label="Controllo ordine di visualizzazione" />
          </div>
          <footer className="mt-[22px] flex items-start gap-[7px]">
            <button aria-label="Annulla" className="flex h-[31px] w-[29px] items-center justify-center rounded-xs border border-[#8f8f8f] bg-gradient-to-b from-[#fbfbfb] to-[#e4e4e4]">
              <CurvedArrow color="#e0823f" size={16} />
            </button>
            <button aria-label="Ripristina" className="flex h-[31px] w-[29px] items-center justify-center rounded-xs border border-[#8f8f8f] bg-gradient-to-b from-[#fbfbfb] to-[#e4e4e4]">
              <CurvedArrow color="#839089" flip size={16} />
            </button>
            <div className="mt-1.5 ml-auto w-[107px]">
              <Check id="live-update" label="Aggiornamento dal vivo" checked />
            </div>
          </footer>
        </div>
      </div>
    </aside>
  );
}

/* ---------- window ---------- */

function Watermark() {
  return (
    <svg className="pointer-events-none absolute top-0 left-0" width="1000" height="520">
      <text
        transform="translate(338 488) rotate(-22.300)"
        fontSize="97"
        fontWeight="700"
        fill="none"
        stroke="#888"
        strokeOpacity="0.220"
        strokeWidth="1.500"
        className="font-['Liberation_Sans',sans-serif]"
      >
        Pigrecoinfinito
      </text>
    </svg>
  );
}

export default function App() {
  return (
    <div className="relative flex h-screen overflow-hidden bg-[#efefef] font-['Lato','Noto_Sans',sans-serif] text-[16px] leading-5 text-[#0c0c0c]">
      <main className="flex min-w-0 flex-1 flex-col border-r border-[#b9b9b9]">
        <div className="relative min-h-0 flex-1 overflow-hidden bg-[#fefefe]">
          <MapDrawing />
          <LabelToolbar />
        </div>
        <TableDock />
      </main>
      <div className="flex w-[9px] shrink-0 flex-col items-center pt-[270px]">
        <div className="h-[78px] w-[3px] bg-[repeating-linear-gradient(180deg,#c6c6c6_0_2px,#fff_2px_3px,transparent_3px_5px)]" />
      </div>
      <StyleDock />
      <Watermark />
    </div>
  );
}
